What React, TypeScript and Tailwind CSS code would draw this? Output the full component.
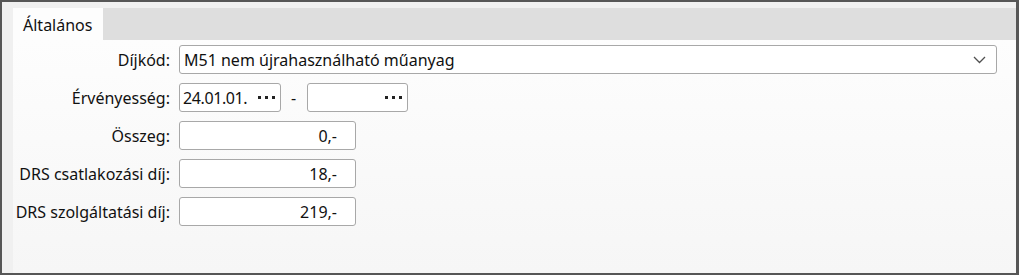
import React from 'react';

const font = { fontFamily: '"Noto Sans", "Open Sans", sans-serif' };

const Dots: React.FC = () => (
  <div className="flex items-center gap-[4px] shrink-0">
    <span className="w-[3px] h-[3px] bg-[#222]" />
    <span className="w-[3px] h-[3px] bg-[#222]" />
    <span className="w-[3px] h-[3px] bg-[#222]" />
  </div>
);

const Row: React.FC<{ label: string; children: React.ReactNode }> = ({ label, children }) => (
  <div className="flex items-center h-[29px]">
    <div className="w-[157px] text-right shrink-0 whitespace-nowrap">{label}</div>
    <div className="ml-[9px] flex items-center h-full">{children}</div>
  </div>
);

const AmountBox: React.FC<{ value: string }> = ({ value }) => (
  <div className="w-[177px] h-[29px] bg-white border border-[#a8a8a8] rounded-[3px] flex items-center justify-end pr-[18px]">
    {value}
  </div>
);

export default function App() {
  return (
    <div
      className="w-[1019px] h-[275px] bg-[#f0f0f0] border-l-2 border-t-2 border-r-[3px] border-b-2 border-[#565656] flex flex-col pl-[11px] pt-[6px] text-[16px] leading-none text-[#111]"
      style={font}
    >
      {/* tab strip */}
      <div className="flex h-[32px] shrink-0">
        <div className="w-[90px] bg-[#fdfdfd] flex items-center pl-[10px] pt-[1px]">Általános</div>
        <div className="flex-1 bg-[#dedede]" />
      </div>

      {/* tab content */}
      <div className="flex-1 bg-gradient-to-b from-[#fdfdfd] to-[#f6f6f6] pt-[5px] flex flex-col gap-[9px]">
        <Row label="Díjkód:">
          <div className="w-[818px] h-[29px] bg-white border border-[#a8a8a8] rounded-[3px] flex items-center justify-between pl-[4px] pr-[10px]">
            <span>M51 nem újrahasználható műanyag</span>
            <svg width="13" height="8" viewBox="0 0 13 8" fill="none">
              <polyline points="1,1 6.5,6.5 12,1" stroke="#505050" strokeWidth="1.3" />
            </svg>
          </div>
        </Row>
        <Row label="Érvényesség:">
          <div className="w-[102px] h-[29px] bg-white border border-[#a8a8a8] rounded-[3px] flex items-center justify-between pl-[3px] pr-[5px] tracking-[-0.4px]">
            <span>24.01.01.</span>
            <Dots />
          </div>
          <span className="ml-[10px] w-[16px]">-</span>
          <div className="w-[101px] h-[29px] bg-white border border-[#a8a8a8] rounded-[3px] flex items-center justify-end pr-[5px]">
            <Dots />
          </div>
        </Row>
        <Row label="Összeg:">
          <AmountBox value="0,-" />
        </Row>
        <Row label="DRS csatlakozási díj:">
          <AmountBox value="18,-" />
        </Row>
        <Row label="DRS szolgáltatási díj:">
          <AmountBox value="219,-" />
        </Row>
      </div>
    </div>
  );
}
